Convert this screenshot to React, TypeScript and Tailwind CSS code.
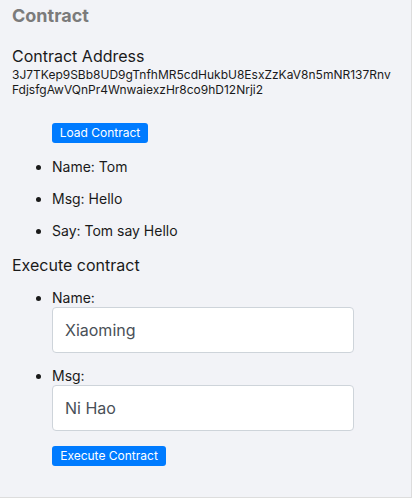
import { useState } from "react";

const fields = [
  { label: "Name:", value: "Xiaoming" },
  { label: "Msg:", value: "Ni Hao" },
];

const info = ["Name: Tom", "Msg: Hello", "Say: Tom say Hello"];

export default function App() {
  const [values, setValues] = useState(fields.map((f) => f.value));

  return (
    <div className="h-[498px] w-[412px] border-b border-r border-[#dddddd] bg-[#f2f3f7] px-3 font-['Inter',sans-serif] text-[#1a1a1a]">
      <h2 className="pt-[5px] text-lg font-bold leading-[22px] text-[#7b7b7b]">
        Contract
      </h2>

      <h3 className="mt-[19px] text-base leading-5">Contract Address</h3>
      <p className="mt-px text-xs leading-[15px]">
        3J7TKep9SBb8UD9gTnfhMR5cdHukbU8EsxZzKaV8n5mNR137Rnv
        <br />
        FdjsfgAwVQnPr4WnwaiexzHr8co9hD12Nrji2
      </p>

      <button className="ml-10 mt-[26px] h-5 w-24 rounded-[3px] bg-[#007bff] text-xs leading-5 text-white">
        Load Contract
      </button>

      <ul className="mt-[14px] list-disc pl-10 text-sm">
        {info.map((item) => (
          <li key={item} className="mb-3 leading-5">
            {item}
          </li>
        ))}
      </ul>

      <h3 className="mt-[14px] text-base leading-5">Execute contract</h3>

      <ul className="mt-[13px] list-disc pl-10 text-sm">
        {fields.map((f, i) => (
          <li key={f.label} className="mb-[13px] leading-5">
            {f.label}
            <input
              value={values[i]}
              onChange={(e) => {
                const next = [...values];
                next[i] = e.target.value;
                setValues(next);
              }}
              className="-mt-px block h-[46px] w-[302px] rounded-[4px] border border-[#ced4da] bg-white px-3 text-base text-[#495057] outline-none"
            />
          </li>
        ))}
      </ul>

      <button className="ml-10 mt-[15px] block h-5 w-[114px] rounded-[3px] bg-[#007bff] text-xs leading-5 text-white">
        Execute Contract
      </button>
    </div>
  );
}
